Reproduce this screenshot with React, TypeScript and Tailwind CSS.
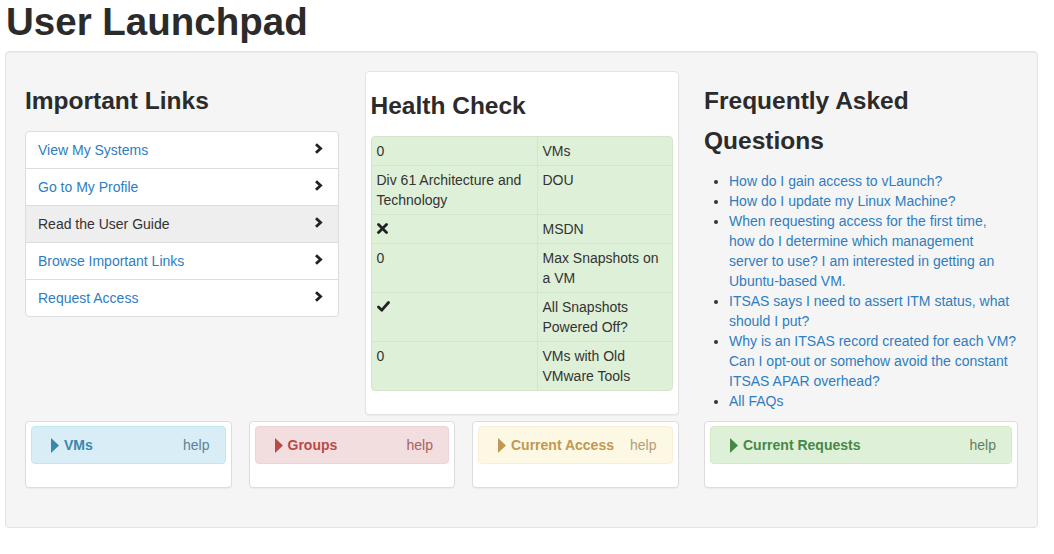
import React from 'react';

const links = ['View My Systems', 'Go to My Profile', 'Read the User Guide', 'Browse Important Links', 'Request Access'];

const faqs: React.ReactNode[] = [
	'How do I gain access to vLaunch?',
	'How do I update my Linux Machine?',
	<>
		When requesting access for the first time,
		<br />
		how do I determine which management
		<br />
		server to use? I am interested in getting an Ubuntu-based VM.
	</>,
	'ITSAS says I need to assert ITM status, what should I put?',
	'Why is an ITSAS record created for each VM? Can I opt-out or somehow avoid the constant ITSAS APAR overhead?',
	'All FAQs',
];

const ChevronRight = () => (
	<svg width="9" height="11" viewBox="0 0 9 11" className="-mt-[3px] shrink-0">
		<path d="M2 1.2 L6.6 5.5 L2 9.8" fill="none" stroke="#222" strokeWidth="2.8" strokeLinejoin="miter" />
	</svg>
);

const Cross = () => (
	<svg width="11" height="11" viewBox="0 0 11 11" className="mt-[4px]">
		<path d="M1.5 1.5 L9.5 9.5 M9.5 1.5 L1.5 9.5" stroke="#222" strokeWidth="2.8" strokeLinecap="round" />
	</svg>
);

const Check = () => (
	<svg width="13" height="11" viewBox="0 0 13 11" className="mt-[4px]">
		<path d="M1.5 6 L4.8 9.2 L11.5 1.5" fill="none" stroke="#222" strokeWidth="2.8" strokeLinecap="round" strokeLinejoin="round" />
	</svg>
);

type Row = { value: React.ReactNode; label: string };

const healthRows: Row[] = [
	{ value: '0', label: 'VMs' },
	{ value: 'Div 61 Architecture and Technology', label: 'DOU' },
	{ value: <Cross />, label: 'MSDN' },
	{ value: '0', label: 'Max Snapshots on a VM' },
	{ value: <Check />, label: 'All Snapshots Powered Off?' },
	{ value: '0', label: 'VMs with Old VMware Tools' },
];

type Box = { title: string; box: string; text: string; help: string };

const boxes: Box[] = [
	{ title: 'VMs', box: 'bg-[#d9edf7] border-[#bce8f1]', text: 'text-[#3a87ad]', help: 'text-[#5f8196]' },
	{ title: 'Groups', box: 'bg-[#f2dede] border-[#eed3d7]', text: 'text-[#b94a48]', help: 'text-[#a8615f]' },
	{ title: 'Current Access', box: 'bg-[#fcf8e3] border-[#fbeed5]', text: 'text-[#c09853]', help: 'text-[#b39e76]' },
];

const requests: Box = { title: 'Current Requests', box: 'bg-[#dff0d8] border-[#d6e9c6]', text: 'text-[#468847]', help: 'text-[#617f5e]' };

/**
 * A small card with a coloured, collapsible-looking header.
 */
const SectionCard = ({ item }: { item: Box }) => (
	<div className="rounded border border-[#dddddd] bg-white px-[5px] pb-[23px] pt-[4px] shadow-[0_1px_1px_rgba(0,0,0,0.04)]">
		<div className={`flex h-[38px] items-center justify-between rounded border pl-[19px] pr-[15px] ${item.box}`}>
			<div className={`flex items-center gap-[5px] font-bold ${item.text}`}>
				<svg width="8" height="15" viewBox="0 0 8 15">
					<path d="M0 0 L8 7.5 L0 15 Z" fill="currentColor" />
				</svg>
				<span>{item.title}</span>
			</div>
			<span className={item.help}>help</span>
		</div>
	</div>
);

const App = () => {
	return (
		<div className="h-[554px] w-[1054px] overflow-hidden bg-white font-['Liberation_Sans',Arial,sans-serif] text-[14px] leading-[20px] text-[#333333]">
			<h1 className="ml-[6px] mt-[2px] mb-[9px] text-[38.5px] font-bold leading-[40px] text-[#2b2b2b]">User Launchpad</h1>

			<div className="ml-[5px] w-[1033px] rounded border border-[#e3e3e3] bg-[#f5f5f5] px-[19px] pb-[39px] pt-[19px] shadow-[inset_0_1px_1px_rgba(0,0,0,0.05)]">
				<div className="grid grid-cols-3 gap-x-[25.5px]">
					{/* Important links */}
					<div>
						<h3 className="my-[10px] text-[24.5px] font-bold leading-[40px] text-[#2b2b2b]">Important Links</h3>
						<div className="overflow-hidden rounded border border-[#dddddd] bg-white">
							{links.map((link, i) => (
								<div
									key={link}
									className={`flex items-center justify-between pl-[12px] pr-[15px] ${i > 0 ? 'h-[37px] border-t border-[#dddddd]' : 'h-[36px]'} ${i === 2 ? 'bg-[#eeeeee] text-[#333333]' : 'text-[#2f7dbf]'}`}
								>
									<span>{link}</span>
									<ChevronRight />
								</div>
							))}
						</div>
					</div>

					{/* Health check */}
					<div className="self-start rounded border border-[#e3e3e3] bg-white p-[5px] shadow-[0_1px_1px_rgba(0,0,0,0.04)]">
						<h3 className="mb-[10px] mt-[9px] text-[24.5px] font-bold leading-[40px] text-[#2b2b2b]">Health Check</h3>
						<table className="mb-[18px] w-full border-separate border-spacing-0 rounded border border-[#d3e5cb] bg-[#dff0d8]">
							<tbody>
								{healthRows.map((row, i) => (
									<tr key={row.label}>
										<td className={`w-[165px] px-[5px] py-[4px] align-top ${i > 0 ? 'border-t border-[#d3e5cb]' : ''}`}>{row.value}</td>
										<td className={`border-l border-[#d3e5cb] px-[5px] py-[4px] align-top ${i > 0 ? 'border-t' : ''}`}>{row.label}</td>
									</tr>
								))}
							</tbody>
						</table>
					</div>

					{/* FAQ */}
					<div>
						<h3 className="my-[10px] text-[24.5px] font-bold leading-[40px] text-[#2b2b2b]">Frequently Asked Questions</h3>
						<ul className="mb-[10px] ml-[25px] list-disc text-[#2f7dbf] marker:text-[#333333]">
							{faqs.map((q, i) => (
								<li key={i}>{q}</li>
							))}
						</ul>
					</div>

					{/* Bottom row */}
					<div className="col-span-2 grid grid-cols-3 gap-x-[17px]">
						{boxes.map((b) => (
							<SectionCard key={b.title} item={b} />
						))}
					</div>
					<div>
						<SectionCard item={requests} />
					</div>
				</div>
			</div>
		</div>
	);
};

export default App;
